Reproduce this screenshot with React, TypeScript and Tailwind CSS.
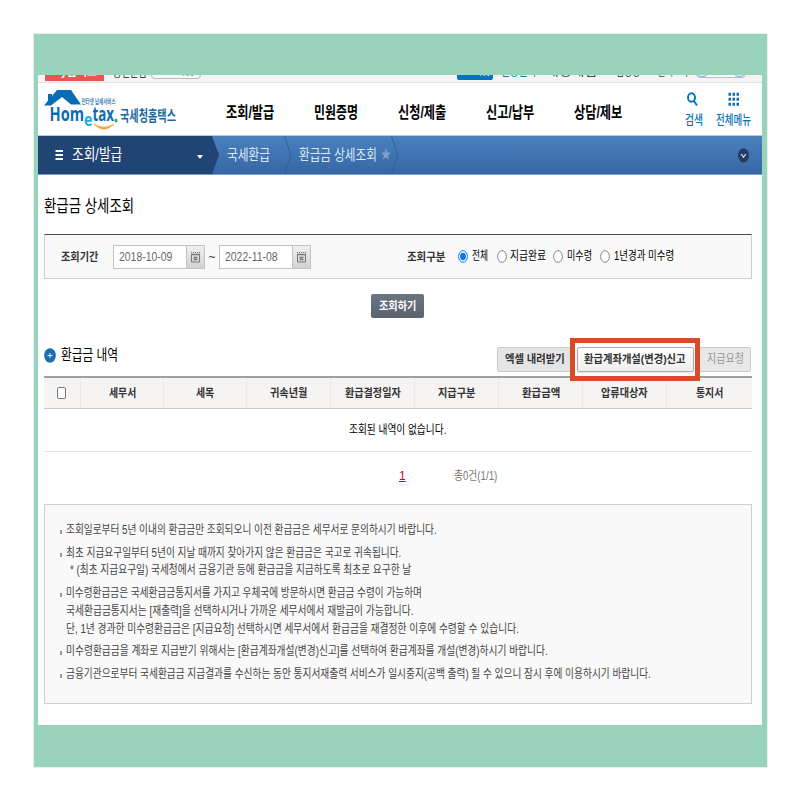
import { useLayoutEffect, useRef } from "react";
import type { ReactNode } from "react";

// Narrow Korean text: the glyphs are squeezed to the width set by className.
function Narrow({
  className,
  children,
}: {
  className: string;
  children: ReactNode;
}) {
  const outer = useRef<HTMLSpanElement>(null);
  const inner = useRef<HTMLSpanElement>(null);
  useLayoutEffect(() => {
    if (!outer.current || !inner.current) return;
    const scale = outer.current.clientWidth / inner.current.offsetWidth;
    inner.current.style.transform = `scaleX(${scale})`;
  }, []);
  return (
    <span ref={outer} className={`block shrink-0 whitespace-nowrap ${className}`}>
      <span ref={inner} className="inline-block origin-left">
        {children}
      </span>
    </span>
  );
}

const columns = [
  { label: "세무서", width: "w-[27px]", cell: "w-[83px]" },
  { label: "세목", width: "w-[18px]", cell: "w-[83px]" },
  { label: "귀속년월", width: "w-[37px]", cell: "w-[84px]" },
  { label: "환급결정일자", width: "w-[56px]", cell: "w-[84px]" },
  { label: "지급구분", width: "w-[37px]", cell: "w-[84px]" },
  { label: "환급금액", width: "w-[38px]", cell: "w-[84px]" },
  { label: "압류대상자", width: "w-[47px]", cell: "w-[84px]" },
  { label: "통지서", width: "w-[27px]", cell: "flex-1" },
];

const notes = [
  [{ text: "조회일로부터 5년 이내의 환급금만 조회되오니 이전 환급금은 세무서로 문의하시기 바랍니다.", width: "w-[371px]" }],
  [
    { text: "최초 지급요구일부터 5년이 지날 때까지 찾아가지 않은 환급금은 국고로 귀속됩니다.", width: "w-[335px]" },
    { text: "* (최초 지급요구일) 국세청에서 금융기관 등에 환급금을 지급하도록 최초로 요구한 날", width: "w-[341px] ml-1" },
  ],
  [
    { text: "미수령환급금은 국세환급금통지서를 가지고 우체국에 방문하시면 환급금 수령이 가능하며", width: "w-[356px]" },
    { text: "국세환급금통지서는 [재출력]을 선택하시거나 가까운 세무서에서 재발급이 가능합니다.", width: "w-[347px]" },
    { text: "단, 1년 경과한 미수령환급금은 [지급요청] 선택하시면 세무서에서 환급금을 재결정한 이후에 수령할 수 있습니다.", width: "w-[453px]" },
  ],
  [{ text: "미수령환급금을 계좌로 지급받기 위해서는 [환급계좌개설(변경)신고]를 선택하여 환급계좌를 개설(변경)하시기 바랍니다.", width: "w-[482px]" }],
  [{ text: "금융기관으로부터 국세환급금 지급결과를 수신하는 동안 통지서재출력 서비스가 일시중지(공백 출력) 될 수 있으니 잠시 후에 이용하시기 바랍니다.", width: "w-[585px]" }],
];

function Logo() {
  return (
    <svg width="134" height="46" viewBox="0 0 134 46" className="shrink-0">
      <path d="M0 19.500 L13 4H27L37 18.500H27L18 11L7 19.500Z" fill="#0a6cb5" />
      <path d="M4 8h4v5l-4 4Z" fill="#0a6cb5" />
      <text x="37.500" y="17.500" fontSize="6.500" fontWeight="700" fill="#3a82b5" textLength="34" lengthAdjust="spacingAndGlyphs">
        인터넷 납세서비스
      </text>
      <g fontFamily="Open Sans" fontWeight="700" fill="#0a6cb5">
        <text x="5.500" y="34.500" fontSize="20" textLength="34.500" lengthAdjust="spacingAndGlyphs">Hom</text>
        <text x="40" y="39.500" fontSize="17" fill="#20b0e0" textLength="8.500" lengthAdjust="spacingAndGlyphs">e</text>
        <text x="48.500" y="34.500" fontSize="20" textLength="21.500" lengthAdjust="spacingAndGlyphs">tax</text>
      </g>
      <ellipse cx="72" cy="34.500" rx="1.500" ry="2" fill="#35ad4b" />
      <path d="M50 38 Q60 48.500 70 38 Q60 44.500 50 38Z" fill="#f5a530" stroke="#f5a530" strokeWidth=".6" />
      <text x="76" y="34.500" fontSize="15" fontWeight="700" fill="#14699f" textLength="56" lengthAdjust="spacingAndGlyphs">
        국세청홈택스
      </text>
    </svg>
  );
}

function CalendarButton() {
  return (
    <span className="flex h-6 w-[18px] items-center justify-center border border-l-0 border-[#c3c3c3] bg-linear-to-b from-[#f0f0f0] to-[#d2d2d2]">
      <svg width="9" height="12" viewBox="0 0 9 12" fill="none" stroke="#777">
        <path d="M0 1.500h9" strokeDasharray="1 1" />
        <path d="M0 3.500h9" strokeWidth="1.500" />
        <path d="M.5 4v7h8V4" />
        <path d="M2.500 6.500h4M2.500 8.500h4" strokeWidth="1.500" />
      </svg>
    </span>
  );
}

function DateField({ value }: { value: string }) {
  return (
    <div className="flex">
      <span className="flex h-6 w-[74px] items-center border border-[#c3c3c3] bg-white pl-[5px] text-xs text-[#666]">
        <Narrow className="w-[53px]">{value}</Narrow>
      </span>
      <CalendarButton />
    </div>
  );
}

function Radio({ checked }: { checked?: boolean }) {
  return (
    <svg width="10" height="13" viewBox="0 0 10 13" className="shrink-0">
      <ellipse cx="5" cy="6.500" rx="4.400" ry="5.800" fill="#fff" stroke={checked ? "#0b75f5" : "#858585"} />
      {checked && <ellipse cx="5" cy="6.500" rx="2.900" ry="3.800" fill="#0b75f5" />}
    </svg>
  );
}

function TopBar() {
  return (
    <div className="flex h-2 items-end overflow-hidden border-b border-[#e3e3e3] bg-[#f4f4f4] pl-[7px] text-[13px] leading-4 text-[#444]">
      <span className="mb-px flex h-5 w-[59px] shrink-0 items-end justify-center bg-[#ee5354] leading-5 text-white">
        <Narrow className="w-[45px] font-bold">My홈택스</Narrow>
      </span>
      <Narrow className="mb-0.5 ml-[9px] w-[34px]">통신문함</Narrow>
      <span className="mb-[3px] ml-1 flex h-5 w-[50px] shrink-0 items-end justify-center rounded-sm border border-[#bbb] bg-[#f8f8f8] text-[11px] leading-3.5 text-[#888]">
        <Narrow className="w-9">로그아웃</Narrow>
      </span>
      <span className="mb-0.5 ml-[256px] flex h-5 w-9 shrink-0 items-end justify-center rounded-xs bg-[#0873bd] leading-5 text-white">
        <Narrow className="w-[30px]">로그아웃</Narrow>
      </span>
      <Narrow className="mb-[3px] ml-2 w-[35px] text-[#1674b4]">인증센터</Narrow>
      <Narrow className="mb-[3px] ml-[10px] w-[62px]">개정세법 ▾</Narrow>
      <Narrow className="mb-[3px] ml-2 w-[32px]">법령정보</Narrow>
      <Narrow className="mb-[3px] ml-[10px] w-[30px]">글씨크기</Narrow>
      <span className="mb-1 ml-2 flex h-5 w-[50px] shrink-0 justify-between rounded-sm border border-[#b8bec5] bg-white">
        <span className="w-[11px] rounded-sm border border-[#8fb0d8] bg-[#e6eef8]" />
        <span className="w-[11px] rounded-sm border border-[#8fb0d8] bg-[#e6eef8]" />
      </span>
    </div>
  );
}

function Header() {
  return (
    <header className="flex h-[52px] items-center pl-1.5">
      <Logo />
      <nav className="mt-2 ml-12 flex flex-1 text-base leading-5 font-bold text-black">
        <Narrow className="w-12">조회/발급</Narrow>
        <Narrow className="ml-10 w-11">민원증명</Narrow>
        <Narrow className="ml-10 w-12">신청/제출</Narrow>
        <Narrow className="ml-10 w-12">신고/납부</Narrow>
        <Narrow className="ml-10 w-12">상담/제보</Narrow>
      </nav>
      <div className="mt-0.5 mr-[11px] flex gap-[13px] text-[13px] leading-4 font-medium text-[#0d72b5]">
        <div className="flex flex-col items-center gap-[5px]">
          <svg width="12" height="15" viewBox="0 0 12 15" fill="none" stroke="#0d72b5" strokeWidth="2" className="mr-1">
            <ellipse cx="5.500" cy="5.500" rx="3.500" ry="4.200" />
            <path d="M8 9 L11 13.500" />
          </svg>
          <Narrow className="w-[18px]">검색</Narrow>
        </div>
        <div className="flex flex-col items-center gap-[5px]">
          <svg width="11" height="15" viewBox="0 0 11 15" stroke="#0d72b5" strokeWidth="3">
            <path d="M.5 2.200h11M.5 7.200h11M.5 12.200h11" strokeDasharray="2.500 1.500" />
          </svg>
          <Narrow className="w-[35px]">전체메뉴</Narrow>
        </div>
      </div>
    </header>
  );
}

function Separator() {
  return (
    <svg width="8" height="38" viewBox="0 0 8 38" fill="none" className="shrink-0">
      <path d="M.5 0 L7 19 L.5 38" stroke="#28649e" />
    </svg>
  );
}

function Breadcrumb() {
  return (
    <div className="flex h-10 items-center border-y border-t-[#b9c9d8] border-b-[#7ba0cd] bg-linear-to-b from-[#4a80bd] to-[#3767a5] text-base leading-5 text-[#dce9f8]">
      <div className="flex h-full w-[174px] items-center bg-[#204473] pl-[17px] text-white">
        <svg width="9" height="12" viewBox="0 0 9 12" stroke="#fff" strokeWidth="2" className="shrink-0">
          <path d="M.5 2h7.500M.5 6h7.500M.5 10h7.500" />
        </svg>
        <Narrow className="ml-2 w-[50px]">조회/발급</Narrow>
        <svg width="7" height="5" viewBox="0 0 7 5" className="mt-1 ml-[75px] shrink-0">
          <path d="M0 0h6L3 4Z" fill="#fff" />
        </svg>
      </div>
      <svg width="7" height="38" viewBox="0 0 7 38" className="shrink-0">
        <path d="M0 0 L7 19 L0 38Z" fill="#204473" />
      </svg>
      <Narrow className="mr-[14px] ml-2 w-[43px] text-[15px]">국세환급</Narrow>
      <Separator />
      <Narrow className="mr-[5px] ml-[7px] w-[78px] text-[15px]">환급금 상세조회</Narrow>
      <svg width="10" height="13" viewBox="0 0 10 13" className="-mt-0.5 -ml-px shrink-0">
        <path d="M5 0 L6.300 4.500H10L7 7.500L8.200 12L5 9.300L1.800 12L3 7.500L0 4.500H3.700Z" fill="#7f9fc8" />
      </svg>
      <Separator />
      <svg width="11" height="15" viewBox="0 0 11 15" className="mt-px mr-[13px] ml-auto">
        <ellipse cx="5.500" cy="7.500" rx="5.500" ry="7.200" fill="#263d61" />
        <path d="M3.200 6 L5.500 9.200 L7.800 6" fill="none" stroke="#d5deea" strokeWidth="1.200" />
      </svg>
    </div>
  );
}

function SearchPanel() {
  return (
    <div className="flex h-[45px] items-center border border-[#ccc] border-t-[#4c4c4c] bg-[#f9f9f9] pl-4 text-xs leading-4 text-[#333]">
      <Narrow className="mr-[15px] w-[37px] text-[11px] font-bold">조회기간</Narrow>
      <DateField value="2018-10-09" />
      <span className="w-[14px] text-center">~</span>
      <DateField value="2022-11-08" />
      <Narrow className="ml-[96px] w-[38px] text-[11px] font-bold">조회구분</Narrow>
      <div className="-mt-px ml-[13px] flex items-center text-black">
        <Radio checked />
        <Narrow className="mr-[9px] ml-1 w-4">전체</Narrow>
        <Radio />
        <Narrow className="mr-[7px] ml-[3px] w-9">지급완료</Narrow>
        <Radio />
        <Narrow className="mr-2 ml-1 w-[25px]">미수령</Narrow>
        <Radio />
        <Narrow className="ml-1 w-[60px]">1년경과 미수령</Narrow>
      </div>
    </div>
  );
}

function ResultHeading() {
  return (
    <div className="-mb-2 flex h-[58px] items-center">
      <svg width="12" height="15" viewBox="0 0 12 15" className="shrink-0">
        <ellipse cx="6" cy="7.500" rx="5.800" ry="7.300" fill="#1b6fab" />
        <path d="M3.500 7.500h5M6 5v5" stroke="#e4f1fa" />
      </svg>
      <Narrow className="ml-[5px] w-[57px] text-[15px] leading-5 text-black">환급금 내역</Narrow>
      <div className="z-10 ml-auto flex items-center text-[11px] leading-4 font-bold">
        <span className="mt-2 flex h-[25px] w-[74px] items-center rounded-xs border border-[#ccc] bg-[#e4e4e4] pl-[7px] text-[#333]">
          <Narrow className="w-[60px]">엑셀 내려받기</Narrow>
        </span>
        <span className="z-10 mt-2 -mr-px -ml-px flex h-[43px] w-[130px] items-center justify-center border-5 border-[#d94a27] bg-white">
          <span className="flex h-[25px] w-[117px] items-center justify-center rounded-xs border border-[#aaa] bg-linear-to-b from-white to-[#eee] text-[#333] shadow-sm">
            <Narrow className="w-[102px]">환급계좌개설(변경)신고</Narrow>
          </span>
        </span>
        <span className="mt-2 mr-px flex h-[25px] w-[52px] items-center justify-center rounded-xs border border-[#ccc] bg-[#e8e8e8] text-[#999]">
          <Narrow className="w-[37px] text-xs font-normal">지급요청</Narrow>
        </span>
      </div>
    </div>
  );
}

function ResultTable() {
  return (
    <div className="text-xs leading-4 text-[#333]">
      <div className="flex h-[33px] border-t-2 border-b border-t-[#a0a0a0] border-b-[#c8c8c8] bg-[#f5f4f3] text-[11px] font-bold">
        <div className="flex w-9 items-center pl-[13px]">
          <span className="h-3 w-[9px] rounded-xs border border-[#777] bg-white" />
        </div>
        {columns.map((column) => (
          <div key={column.label} className={`flex items-center justify-center border-l border-[#e8e8e8] ${column.cell}`}>
            <Narrow className={column.width}>{column.label}</Narrow>
          </div>
        ))}
      </div>
      <div className="flex h-[43px] items-center justify-center border-b border-[#e5e5e5] pr-0.5 text-black">
        <Narrow className="w-[97px]">조회된 내역이 없습니다.</Narrow>
      </div>
      <div className="flex h-12 items-center pl-[355px] text-[#777]">
        <span className="w-[7px] text-xs text-[#d5002c] underline">1</span>
        <Narrow className="ml-[48px] w-[43px]">총0건(1/1)</Narrow>
      </div>
    </div>
  );
}

export default function App() {
  return (
    <div className="h-[800px] w-[800px] bg-white pt-[33px] pl-[33px] font-['Liberation_Sans','Noto_Sans_CJK_KR',sans-serif]">
      <div className="h-[735px] w-[735px] border border-[#e2f3eb] bg-[#9ad3bb] pt-[41px] pl-1">
        <main className="h-[650px] w-[724px] overflow-hidden bg-white">
          <TopBar />
          <Header />
          <Breadcrumb />
          <div className="mr-2.5 ml-1.5">
            <h1 className="h-[59px] pt-5 text-[17px] leading-6 text-black">
              <Narrow className="w-[90px]">환급금 상세조회</Narrow>
            </h1>
            <SearchPanel />
            <div className="flex justify-center pt-[15px] pr-0.5 pb-2">
              <button className="flex h-6 w-[53px] items-center justify-center rounded-xs bg-linear-to-b from-[#6c7683] to-[#5a6270] text-[11px] leading-4 font-bold text-white">
                <Narrow className="w-[37px]">조회하기</Narrow>
              </button>
            </div>
            <ResultHeading />
            <ResultTable />
            <ul className="mt-1 flex h-[200px] flex-col gap-[5px] border border-[#d0d0d0] bg-[#f9f9f9] pt-[17px] pl-[15px] text-xs leading-[17.700px] text-[#444]">
              {notes.map((lines) => (
                <li key={lines[0].text} className="flex gap-1">
                  <span className="mt-2 h-1 w-0.5 bg-[#999]" />
                  <div>
                    {lines.map((line) => (
                      <Narrow key={line.text} className={line.width}>{line.text}</Narrow>
                    ))}
                  </div>
                </li>
              ))}
            </ul>
          </div>
        </main>
      </div>
    </div>
  );
}
